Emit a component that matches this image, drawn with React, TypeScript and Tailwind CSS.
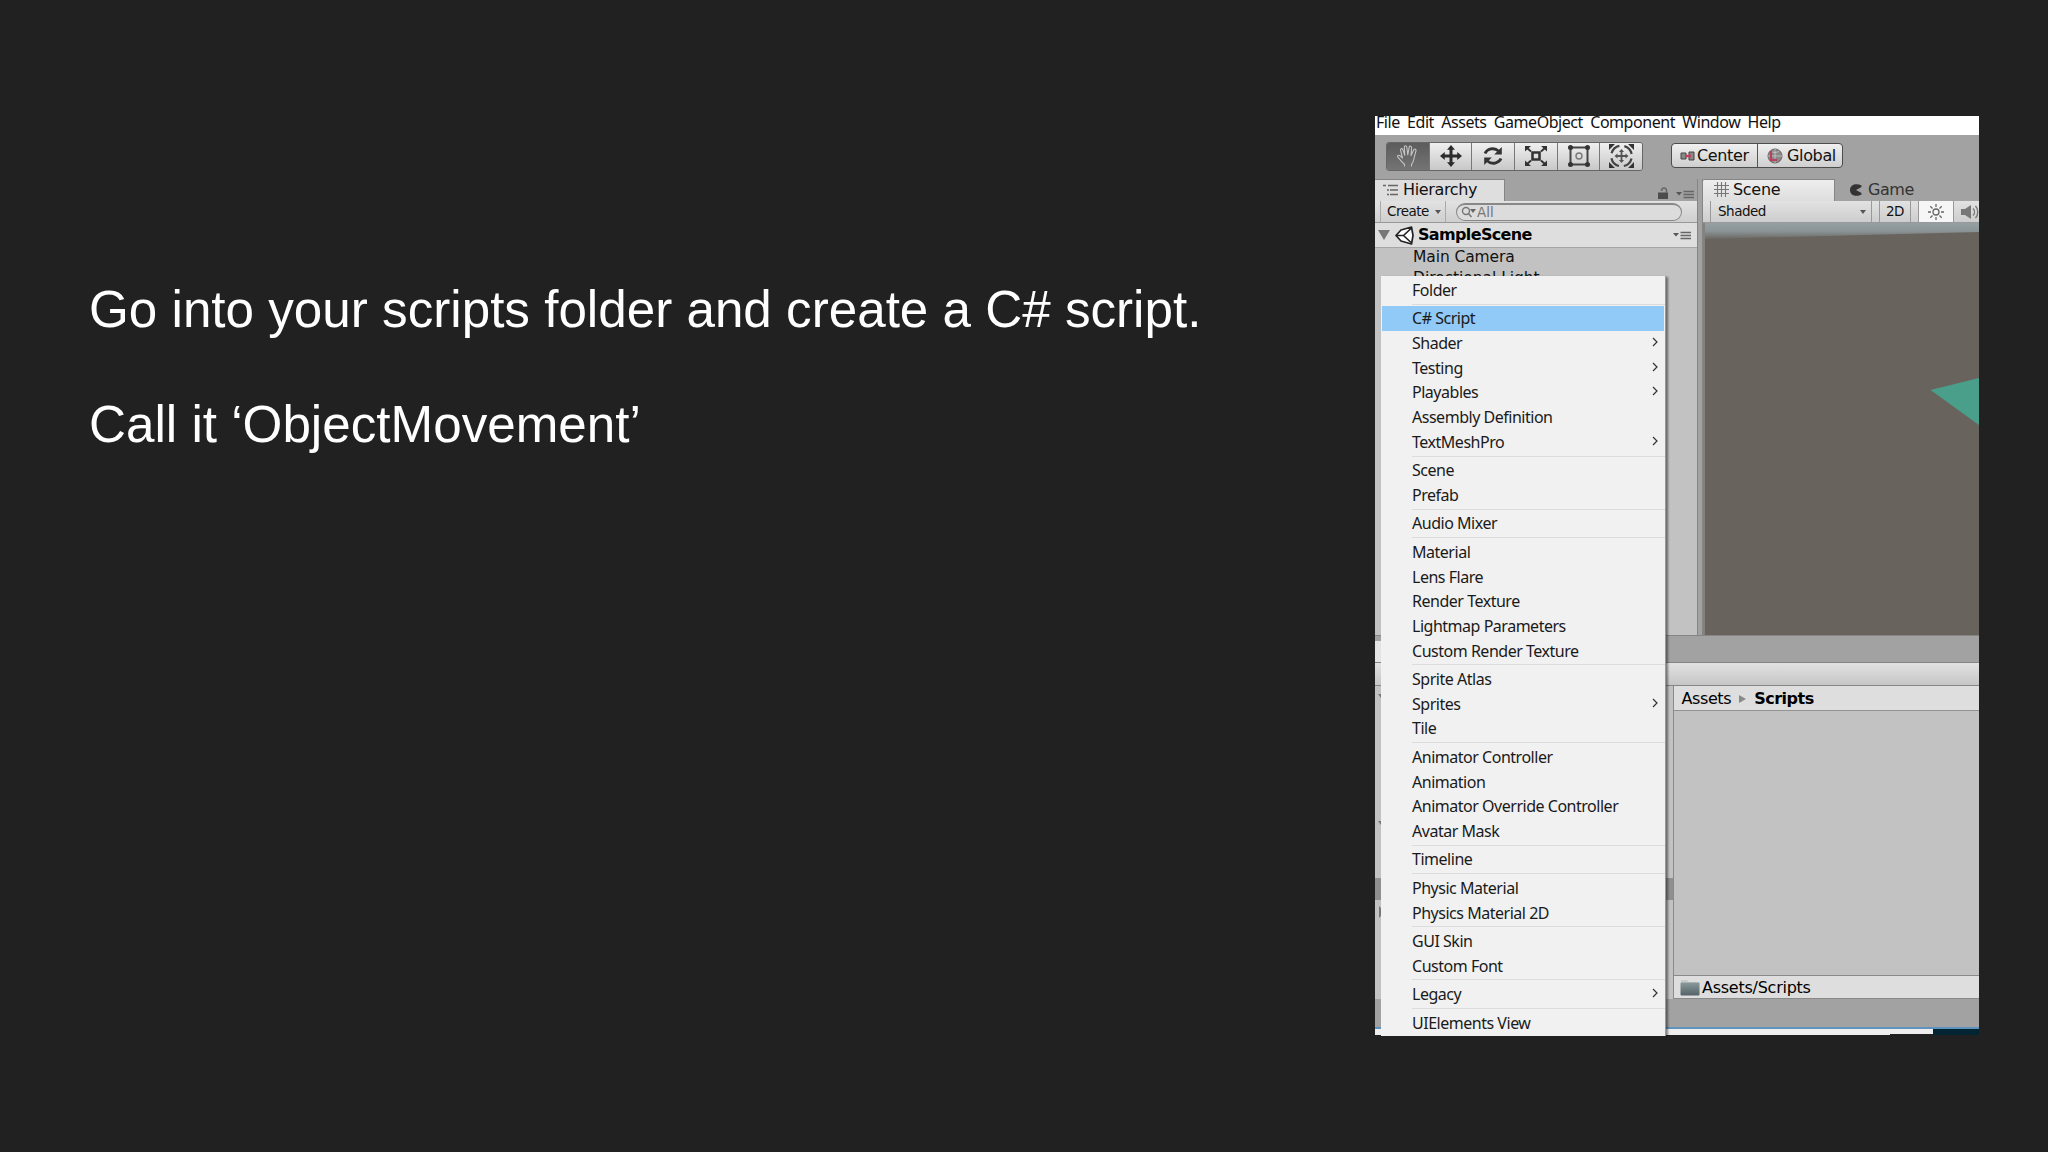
import React from "react";
import { clsx } from "clsx";

type MenuItem = { label: string; sub?: boolean; active?: boolean };

const groups: MenuItem[][] = [
  [{ label: "Folder" }],
  [
    { label: "C# Script", active: true },
    { label: "Shader", sub: true },
    { label: "Testing", sub: true },
    { label: "Playables", sub: true },
    { label: "Assembly Definition" },
    { label: "TextMeshPro", sub: true },
  ],
  [{ label: "Scene" }, { label: "Prefab" }],
  [{ label: "Audio Mixer" }],
  [
    { label: "Material" },
    { label: "Lens Flare" },
    { label: "Render Texture" },
    { label: "Lightmap Parameters" },
    { label: "Custom Render Texture" },
  ],
  [{ label: "Sprite Atlas" }, { label: "Sprites", sub: true }, { label: "Tile" }],
  [
    { label: "Animator Controller" },
    { label: "Animation" },
    { label: "Animator Override Controller" },
    { label: "Avatar Mask" },
  ],
  [{ label: "Timeline" }],
  [{ label: "Physic Material" }, { label: "Physics Material 2D" }],
  [{ label: "GUI Skin" }, { label: "Custom Font" }],
  [{ label: "Legacy", sub: true }],
  [{ label: "UIElements View" }],
];

const HandIcon = () => (
  <svg width="24" height="24" viewBox="0 0 24 24" fill="none" stroke="#c4c4c4" strokeWidth="1.1" strokeLinejoin="round">
    <path d="M8.5 22.5v-2.2C6 18.5 4.500 16 1.800 13.200c-.9-1.400.6-2.500 2-1.500l2.700 2.300L4.500 6.200c-.3-1.700 1.700-2.200 2.300-.6l2 5.700-.5-8.200c0-1.700 2.200-1.800 2.500-.1l1 8 1.400-7.800c.4-1.600 2.500-1.200 2.400.4l-.6 8 2.800-5.800c.8-1.500 2.700-.6 2.200 1-.8 3-1.700 6-2.200 8.700-.5 2.300-1.300 3.600-2.300 4.800v2.200" />
  </svg>
);

const MoveIcon = () => (
  <svg width="24" height="24" viewBox="0 0 24 24" fill="#2c2c2c">
    <path d="M12 1l4 4.800h-2.500v4.700h4.700V8l4.800 4-4.800 4v-2.500h-4.700v4.700H16L12 23l-4-4.800h2.500v-4.700H5.800V16L1 12l4.800-4v2.500h4.700V5.800H8z" />
  </svg>
);

const RotateIcon = () => (
  <svg width="22" height="22" viewBox="0 0 22 22">
    <g fill="none" stroke="#333" strokeWidth="2.8">
      <path d="M3 8.500C5 4 12 1.800 16.500 6" />
      <path d="M19 13.500C17 18 10 20.200 5.500 16" />
    </g>
    <path d="M19.800 2v7.500h-7.600zM2.200 20v-7.500h7.600z" fill="#333" />
  </svg>
);

const ScaleIcon = () => (
  <svg width="24" height="24" viewBox="0 0 24 24">
    <path d="M8.500 8.500h7v7h-7z" fill="none" stroke="#333" strokeWidth="2.600" />
    <path d="M2.500 3.500l4.500 4M21.500 3.500l-4.500 4M2.500 20.500l4.500-4M21.500 20.500l-4.500-4" stroke="#333" strokeWidth="1.800" />
    <path d="M1 2h6L1 7.500zM23 2h-6l6 5.500zM1 22h6l-6-5.500zM23 22h-6l6-5.500z" fill="#333" />
  </svg>
);

const RectIcon = () => (
  <svg width="24" height="24" viewBox="0 0 24 24">
    <path d="M3.500 3.500h17v17h-17z" fill="none" stroke="#444" strokeWidth="2" />
    <circle cx="12" cy="12" r="3" fill="none" stroke="#777" strokeWidth="1.400" />
    <g fill="#333">
      <circle cx="3.500" cy="3.500" r="2.500" />
      <circle cx="20.500" cy="3.500" r="2.500" />
      <circle cx="3.500" cy="20.500" r="2.500" />
      <circle cx="20.500" cy="20.500" r="2.500" />
    </g>
  </svg>
);

const TransformIcon = () => (
  <svg width="27" height="26" viewBox="0 0 27 26">
    <circle cx="13.500" cy="13" r="10.300" fill="none" stroke="#444" strokeWidth="2.200" strokeDasharray="11.200 5" strokeDashoffset="-2.500" />
    <path d="M1 1h6L1 7zM26 1h-6l6 6zM1 25h6l-6-6zM26 25h-6l6-6z" fill="#333" />
    <path d="M13.500 6l2.600 3h-1.700v3.100h3.100v-1.700l3 2.600-3 2.600v-1.700h-3.100V17h1.700l-2.600 3-2.600-3h1.700v-3.100H9.500v1.700l-3-2.600 3-2.600v1.700h3.100V9h-1.700z" fill="#555" />
  </svg>
);

const UnityIcon = () => (
  <svg width="19" height="19" viewBox="0 0 19 19" fill="#fff" stroke="#222" strokeWidth="1.700" strokeLinejoin="round">
    <path d="M1 9.500l5-5.500 10.500-3L18 9.500 16.500 18 6 15z" />
    <path d="M8.500 9.500H1.500M8.500 9.500l7.500-7M8.500 9.500l7.500 7" fill="none" />
  </svg>
);

const OptionsIcon = () => (
  <svg width="18" height="9" viewBox="0 0 18 9">
    <path d="M0 2h6L3 5.500z" fill="#555" />
    <path d="M7.500 1.500H18M7.500 4.500H18M7.500 7.500H18" stroke="#666" strokeWidth="1.300" />
  </svg>
);

const Caret = ({ className }: { className?: string }) => (
  <svg width="6" height="4" viewBox="0 0 6 4" className={className}>
    <path d="M0 0h6L3 4z" fill="#555" />
  </svg>
);

const tools = [HandIcon, MoveIcon, RotateIcon, ScaleIcon, RectIcon, TransformIcon];

const Toolbar = () => (
  <div className="flex h-[44px] shrink-0 bg-[#a2a2a2] pt-[7px] pl-[11px]">
    <div className="flex h-[29px] w-[257px] overflow-hidden rounded-[3px] border border-[#666]">
      {tools.map((Icon, i) => (
        <div
          key={i}
          className={clsx(
            "flex flex-1 items-center justify-center pb-px",
            i === 0
              ? "bg-linear-to-b from-[#5c5c5c] to-[#747474]"
              : "border-l border-[#777] bg-linear-to-b from-[#f0f0f0] to-[#c8c8c8]"
          )}
        >
          <Icon />
        </div>
      ))}
    </div>
    <div className="mt-px ml-[28px] flex h-[25px] w-[172px] overflow-hidden rounded-[4px] border-[1.500px] border-[#4c4c4c] bg-linear-to-b from-[#f0f0f0] to-[#cfcfcf] text-[16px] leading-[22px] text-[#111]">
      <div className="flex w-[86px] items-center border-r border-[#555] pl-[8px]">
        <svg width="15" height="10" viewBox="0 0 15 10" className="mr-[2px]">
          <path d="M1 2h5v6H1zM9 1h5v8H9z" fill="#888" stroke="#444" />
          <path d="M5 5h6" stroke="#c0405c" strokeWidth="2.500" />
        </svg>
        <span className="tracking-[-0.35px]">Center</span>
      </div>
      <div className="flex items-center pl-[9px]">
        <svg width="16" height="16" viewBox="0 0 16 16" className="mr-[4px]">
          <circle cx="8" cy="8" r="7" fill="#888" stroke="#666" />
          <path d="M8 1v14M1 8h14M3.500 3c3 2 6 2 9 0" fill="none" stroke="#ccc" strokeWidth=".8" />
          <path d="M4 3v9h6" fill="none" stroke="#b8405a" strokeWidth="2" />
        </svg>
        <span className="tracking-[-0.35px]">Global</span>
      </div>
    </div>
  </div>
);

const Hierarchy = () => (
  <div className="flex w-[324.500px] flex-col border-r border-[#858585]">
    <div className="flex h-[22px] items-end justify-between">
      <div className="flex h-[22px] w-[130px] items-center border-t border-r border-[#858585] bg-[#dedede] pb-[2px] pl-[8px] text-[16px]">
        <svg width="15" height="12" viewBox="0 0 15 12" className="mr-[5px]">
          <path d="M0 1.500h3M5 1.500h10M4 6h2M7 6h8M4 10.500h2M7 10.500h8" stroke="#666" strokeWidth="1.400" />
        </svg>
        <span className="tracking-[-0.35px]">Hierarchy</span>
      </div>
      <div className="flex items-end gap-[7px] pr-[3px] pb-[2px]">
        <svg width="11" height="12" viewBox="0 0 11 12">
          <path d="M0 5.500h10V12H0z" fill="#4c4c4c" />
          <path d="M3.500 4c0-4 5-4 5 0v2" fill="none" stroke="#666" strokeWidth="1.500" />
        </svg>
        <OptionsIcon />
      </div>
    </div>
    <div className="flex h-[22px] items-center border-b border-[#999] bg-linear-to-b from-[#e2e2e2] to-[#cfcfcf] text-[13.500px]">
      <div className="ml-[5px] flex h-full w-[66px] items-center border-x border-[#aaa] pl-[6px]">
        <span className="tracking-[-0.5px]">Create</span>
        <Caret className="ml-[6px]" />
      </div>
      <div className="ml-[10px] flex h-[18px] w-[226px] items-center rounded-full border border-t-2 border-[#888] bg-[#dcdcdc] pl-[4px] text-[#777]">
        <svg width="15" height="12" viewBox="0 0 15 12">
          <circle cx="5" cy="5" r="3.500" fill="none" stroke="#777" strokeWidth="1.400" />
          <path d="M7.500 7.500l3 3.500" stroke="#777" strokeWidth="1.500" />
          <path d="M9 3h6l-3 4z" fill="#666" />
        </svg>
        <span className="ml-[1px]">All</span>
      </div>
    </div>
    <div className="flex h-[25px] items-center border-b border-[#a5a5a5] bg-[#dedede] pl-[3px]">
      <svg width="12" height="10" viewBox="0 0 12 10">
        <path d="M0 0h12L6 10z" fill="#777" />
      </svg>
      <span className="ml-[5px]">
        <UnityIcon />
      </span>
      <span className="ml-[4px] flex-1 text-[16px] font-bold tracking-[-0.65px] text-black">SampleScene</span>
      <span className="mr-[6px]">
        <OptionsIcon />
      </span>
    </div>
    <div className="flex-1 bg-[#c2c2c2] pl-[38px] text-[15.500px] leading-[21px]">
      <div className="-mt-px tracking-[-0.1px]">Main Camera</div>
      <div className="tracking-[-0.05px]">Directional Light</div>
    </div>
  </div>
);

const SceneView = () => (
  <div className="ml-[4.500px] flex flex-1 flex-col border-l border-[#858585]">
    <div className="flex h-[22px] text-[16px]">
      <div className="flex w-[132px] items-center rounded-tl-[2px] border-t border-r border-[#858585] bg-linear-to-b from-[#eee] to-[#dedede] pb-[2px] pl-[11px]">
        <svg width="15" height="15" viewBox="0 0 15 15" className="mr-[4px]">
          <path d="M3.500 0v15M7.500 0v15M11.500 0v15M0 3.500h15M0 7.500h15M0 11.500h15" stroke="#777" strokeWidth="1.100" />
        </svg>
        <span className="tracking-[-0.3px]">Scene</span>
      </div>
      <div className="flex items-center pb-px pl-[15px] text-[#333]">
        <svg width="12" height="12" viewBox="0 0 12 12" className="mr-[6px]">
          <path d="M11.500 1.500C7-1 0 0 0 6s7 7 11.500 4.500V9L6 6l5.500-3z" fill="#333" />
        </svg>
        <span className="tracking-[-0.45px]">Game</span>
      </div>
    </div>
    <div className="flex h-[22px] items-center border-b border-[#999] bg-linear-to-b from-[#e2e2e2] to-[#cdcdcd] text-[13.500px]">
      <div className="ml-[7px] flex h-full w-[162px] items-center justify-between border-x border-[#999] pr-[5px] pl-[7px]">
        <span className="tracking-[-0.5px]">Shaded</span>
        <Caret />
      </div>
      <div className="ml-[7px] flex h-full w-[32px] items-center justify-center border-x border-[#999] tracking-[-0.5px]">2D</div>
      <div className="ml-[7px] flex h-full w-[36px] items-center justify-center border-x border-[#999] bg-[#f6f6f6]">
        <svg width="16" height="16" viewBox="0 0 16 16" fill="none" stroke="#666" strokeWidth="1.300">
          <circle cx="8" cy="8" r="3" />
          <path d="M8 0v3M8 13v3M0 8h3M13 8h3M2.300 2.300l2.200 2.200M11.500 11.500l2.200 2.200M2.300 13.700l2.200-2.200M11.500 4.500l2.200-2.200" />
        </svg>
      </div>
      <svg width="18" height="16" viewBox="0 0 18 16" className="ml-[7px] shrink-0">
        <path d="M0 5h4l6-4v14l-6-4H0z" fill="#777" />
        <path d="M12 4.500c2 2 2 5 0 7M14.500 2c3 3 3 9 0 12" fill="none" stroke="#777" strokeWidth="1.400" />
      </svg>
    </div>
    <div className="flex-1 border-l-2 border-[#85827e] bg-[#69635e]">
      <svg width="274" height="411" viewBox="0 0 274 411">
        <defs>
          <linearGradient id="sky" x1="0" y1="0" x2="0" y2="1">
            <stop offset="0" stopColor="#94a0a3" />
            <stop offset=".5" stopColor="#8b9597" />
            <stop offset="1" stopColor="#6c6964" />
          </linearGradient>
        </defs>
        <path d="M0 0h274v9L0 16z" fill="url(#sky)" />
        <path d="M225.500 167l48.500-12v47z" fill="#4a9f8b" />
      </svg>
    </div>
  </div>
);

const Project = () => (
  <div className="flex h-[313px] shrink-0">
    <div className="flex w-[299px] flex-col border-r border-[#8a8a8a] bg-[#c2c2c2]">
      <svg width="6" height="4" viewBox="0 0 6 4" className="mt-[8px] ml-[3px]">
        <path d="M0 0h6L3 4z" fill="#777" />
      </svg>
      <svg width="6" height="4" viewBox="0 0 6 4" className="mt-[123px] ml-[3px]">
        <path d="M0 0h6L3 4z" fill="#777" />
      </svg>
      <div className="mt-[53px] h-[22px] bg-[#8f8f8f]" />
      <svg width="6" height="12" viewBox="0 0 6 12" className="mt-[6px] ml-[4px]">
        <path d="M0 0l6 6-6 6z" fill="#777" />
      </svg>
    </div>
    <div className="flex flex-1 flex-col">
      <div className="flex h-[25px] items-center border-b border-[#929292] bg-[#dedede] pt-px pl-[7.500px] text-[16px] text-black">
        <span className="tracking-[-0.4px]">Assets</span>
        <svg width="7" height="8" viewBox="0 0 7 8" className="mx-[8px]">
          <path d="M0 0l7 4-7 4z" fill="#8a8a8a" />
        </svg>
        <span className="font-bold tracking-[-0.5px]">Scripts</span>
      </div>
      <div className="flex-1 bg-[#c2c2c2]" />
      <div className="flex h-[24px] items-center border-y border-[#8a8a8a] bg-[#dedede] pt-px pl-[6px] text-[16px] text-black">
        <svg width="20" height="17" viewBox="0 0 20 17" className="mb-px">
          <defs>
            <linearGradient id="folder" x1="0" y1="0" x2="0" y2="1">
              <stop offset="0" stopColor="#8b999c" />
              <stop offset="1" stopColor="#536367" />
            </linearGradient>
          </defs>
          <path d="M1 2q0-1 1-1h5l2 2h10v2H1z" fill="#c5cbcb" />
          <rect x=".5" y="3.500" width="19" height="13" rx="1" fill="url(#folder)" />
        </svg>
        <span className="ml-[2px] tracking-[-0.25px]">Assets/Scripts</span>
      </div>
    </div>
  </div>
);

const ContextMenu = () => (
  <div className="absolute top-[160px] left-[6px] h-[760px] w-[285px] border-r border-[#999] bg-[#f1f1f1] pt-[1.600px] font-['Noto_Sans','Open_Sans',sans-serif] text-[16px] text-[#1a1a1a] shadow-[2px_1px_2px_rgba(0,0,0,0.45)]">
    {groups.map((items, i) => (
      <div key={i}>
        {i > 0 && (
          <div className="flex h-[3.770px] items-center pl-[31px]">
            <div className="h-px w-full bg-[#dcdcdc]" />
          </div>
        )}
        {items.map(({ label, sub, active }) => (
          <div
            key={label}
            className={clsx(
              "mx-px flex h-[24.700px] items-center justify-between pr-[6px] pl-[30px] leading-[24px]",
              active && "bg-[#91c9f7]"
            )}
          >
            <span className="tracking-[-0.48px] whitespace-nowrap">{label}</span>
            {sub && (
              <svg width="6" height="10" viewBox="0 0 6 10" fill="none" stroke="#333" strokeWidth="1.200" className="mb-[2px]">
                <path d="M1 1l4 4-4 4" />
              </svg>
            )}
          </div>
        ))}
      </div>
    ))}
  </div>
);

const Editor = () => (
  <div className="relative mt-[116px] flex h-[920px] w-[604px] flex-col overflow-hidden bg-[#a2a2a2] font-['DejaVu_Sans',sans-serif] text-[#111]">
    <div className="flex h-[19px] shrink-0 gap-[7.300px] bg-white pl-px font-['Noto_Sans','Open_Sans',sans-serif] text-[16px] leading-[13px] tracking-[-0.45px] whitespace-nowrap">
      <span>File</span>
      <span>Edit</span>
      <span>Assets</span>
      <span>GameObject</span>
      <span>Component</span>
      <span>Window</span>
      <span>Help</span>
    </div>
    <Toolbar />
    <div className="flex h-[456px] shrink-0">
      <Hierarchy />
      <SceneView />
    </div>
    <div className="h-[27px] shrink-0 border-t border-[#858585]">
      <div className="mt-[5px] h-[21px] w-[20px] bg-[#e4e4e4]" />
    </div>
    <div className="h-[24px] shrink-0 border-y border-[#858585] bg-linear-to-b from-[#e2e2e2] to-[#c6c6c6]" />
    <Project />
    <div className="h-[28px] shrink-0" />
    <div className="flex h-[9px] shrink-0 border-t-2 border-[#5d93bd] bg-[#212121]">
      <div className="h-[6px] w-[515px] bg-[#eee]" />
      <div className="h-[5px] w-[43px] bg-[#eee]" />
      <div className="h-[6px] flex-1 bg-[#032433]" />
    </div>
    <ContextMenu />
  </div>
);

export default function App() {
  return (
    <div className="flex h-[1152px] w-[2048px] overflow-hidden bg-[#212121]">
      <div className="w-[1375px] pt-[252px] pl-[89px] font-['Liberation_Sans',Arial,sans-serif] text-[51.200px] leading-[115px] text-white">
        <p>Go into your scripts folder and create a C# script.</p>
        <p>Call it ‘ObjectMovement’</p>
      </div>
      <Editor />
    </div>
  );
}
